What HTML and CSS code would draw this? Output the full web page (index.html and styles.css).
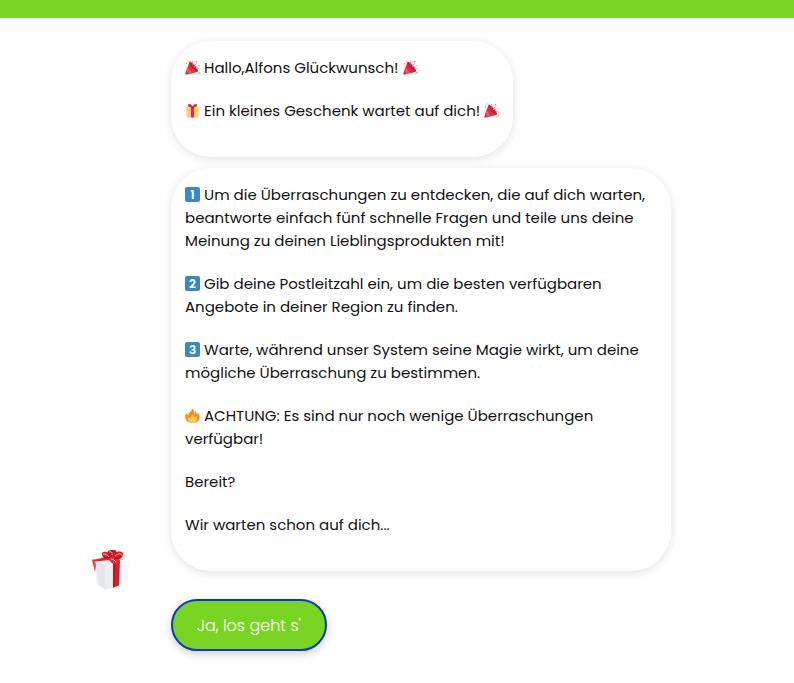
FILE: index.html
```html
<!DOCTYPE html>
<html lang="de">
<head>
<meta charset="utf-8">
<meta name="viewport" content="width=device-width, initial-scale=1">
<title>Überraschung</title>
<link rel="stylesheet" href="styles.css">
</head>
<body>
<svg class="symbols" aria-hidden="true">
  <symbol id="party" viewBox="0 0 16 16">
    <path d="M5 1.500 14 11.300Q14.500 13 11 13.200L1 15.700Q0 15.700.3 14.500Z" fill="#dd2e44"/>
    <path d="M4.400 4 3 8 7.500 14 4.400 14.700 1.500 11 3 7Z" fill="#ea596e"/>
    <path d="M5 1.500C7.500 2 14.500 9 13.500 11.800 11 13 4 5.800 5 1.500Z" fill="#c81c3a"/>
    <path d="M8 5.500C9.500 4 8.500 2.500 7.500.8M10 7.500Q9.500 4.500 12.500 4M12 9.500Q13.500 7.500 15.500 9.500" fill="none" stroke="#aa8dd8" stroke-width="1"/>
    <path d="M12 1 13 2.500M1 3.500l1 1M14.500 12.500l.7 2" stroke="#77b255" stroke-width="1.200"/>
    <path d="M2.500 1H4M10 2h1.200M14.300 6h1.300M12 7l1 .5M.5 7.500h1M13 15h1" stroke="#e9b95d" stroke-width="1.200"/>
  </symbol>
  <symbol id="present" viewBox="0 0 16 16">
    <path d="M1.500 6h13v8.500a1 1 0 0 1-1 1h-11a1 1 0 0 1-1-1Z" fill="#fdd27b"/>
    <rect x=".5" y="4" width="15" height="3.300" rx="1" fill="#ffd983"/>
    <path d="M1.500 7.300h13v1h-13Z" fill="#f5bf66"/>
    <path d="M6.300 4h3.400v11.500H6.300Z" fill="#da2f47"/>
    <path d="M8 4C6 4.500 3 4.500 3 2.700 3 .2 6.800.3 8 4ZM8 4c2 .5 5 .5 5-1.300C13 .2 9.200.3 8 4Z" fill="#dd2e44"/>
    <path d="M6.500 4h3v1.500h-3Z" fill="#b5122f"/>
  </symbol>
  <symbol id="fire" viewBox="0 0 16 16">
    <path d="M7.300.2C9.800 1.500 10 4.500 9.500 6.400 10.800 6 11.200 4.500 10.800 3 12.200 4 12.500 5.800 12.500 7 13.400 6.600 13.700 5.500 13.500 4.800 17.500 9 16 15.800 8 15.800 0 15.800-1.200 9 1.700 4.800 1.800 6.300 2.700 7.300 3.600 7.700 3.200 4.800 7.900 4 7.300.2Z" fill="#f58a1e"/>
    <path d="M8 6.500C10 8 9.400 9.500 9.700 10.300 10.600 10.100 11.500 9.300 11.500 8 14.500 12 11.800 15.600 8 15.600 4 15.600 1.800 12 4 8.800 4.300 10.300 5 10.800 5.700 10.800 5.500 9 8 8.600 8 6.500Z" fill="#ffcc4d"/>
  </symbol>
</svg>

<header class="topbar"></header>

<main class="chat">
  <div class="avatar">
    <svg class="avatar-image" viewBox="0 0 40 42" role="img" aria-label="Geschenk">
      <path d="M27 14 39 11 36 33 25 38Z" fill="#f9f9f9"/>
      <path d="M1 11 14 7 30 12 31 15 14 20 1 15Z" fill="#eeeff2"/>
      <path d="M3 16 14 19 15 41 6 35Z" fill="#e4e6ea"/>
      <path d="M14 19 30 14.500 27 37 15 41Z" fill="#ebecef"/>
      <path d="M1 11 14 16 14 20 1 15Z" fill="#e3e5ea"/>
      <path d="M14 16 31 12 30.500 16 14 20Z" fill="#f2f3f5"/>
      <path d="M3 16 5 17 8 36 6 35Z" fill="#f1f1f4"/>
      <path d="M22 13 29 11 28 36.500 22 38.500Z" fill="#de1c24"/>
      <path d="M22 14 24 13.500 24 37.800 22 38.500Z" fill="#c9141d"/>
      <path d="M1 11 3 10 5 16 4 23 2 15Z" fill="#e5484c"/>
      <path d="M2 11 15 8 20 11 4 12.500Z" fill="#dc2a30"/>
      <path d="M22 10C15 12 12 9 11 6 10 2 14 2 18 4L22 8Z" fill="#df2028"/>
      <path d="M19 7C14 2 18 1 22 1 28 0 25 6 22 9Z" fill="#c41620"/>
      <path d="M21 8C22 3 29 1 32 4 33 8 28 13 21 11Z" fill="#db1d27"/>
      <path d="M18 9C21 7 30 9 28 14 25 17 18 14 18 9Z" fill="#e52830"/>
      <path d="M12 5Q15 4 18 8M18 3Q22 2 21 6M24 7Q28 3 31 6M20 10Q23 10 25 13" fill="none" stroke="#f7aaa9" stroke-width="1"/>
      <path d="M13 8Q16 10 19 8M23 10Q28 10 30 7" fill="none" stroke="#a50c16" stroke-width="1"/>
    </svg>
  </div>

  <div class="messages">
    <section class="bubble">
      <p><svg class="emoji" role="img" aria-label="Konfetti"><use href="#party"/></svg> Hallo,Alfons Glückwunsch! <svg class="emoji" role="img" aria-label="Konfetti"><use href="#party"/></svg></p>
      <p><svg class="emoji" role="img" aria-label="Geschenk"><use href="#present"/></svg> Ein kleines Geschenk wartet auf dich! <svg class="emoji" role="img" aria-label="Konfetti"><use href="#party"/></svg></p>
    </section>
    <section class="bubble">
      <p><span class="emoji keycap">1</span> Um die Überraschungen zu entdecken, die auf dich warten, beantworte einfach fünf schnelle Fragen und teile uns deine Meinung zu deinen Lieblingsprodukten mit!</p>
      <p><span class="emoji keycap">2</span> Gib deine Postleitzahl ein, um die besten verfügbaren Angebote in deiner Region zu finden.</p>
      <p><span class="emoji keycap">3</span> Warte, während unser System seine Magie wirkt, um deine mögliche Überraschung zu bestimmen.</p>
      <p><svg class="emoji" role="img" aria-label="Feuer"><use href="#fire"/></svg> ACHTUNG: Es sind nur noch wenige Überraschungen verfügbar!</p>
      <p>Bereit?</p>
      <p>Wir warten schon auf dich...</p>
    </section>
  </div>

  <div class="actions">
    <button class="answer" type="button">Ja, los geht s'</button>
  </div>
</main>
</body>
</html>
```
FILE: styles.css
```css
* {
  box-sizing: border-box;
}

body {
  margin: 0;
  background: #fff;
  color: #111;
  font-family: Poppins, Inter, sans-serif;
  font-size: 15px;
  line-height: 23px;
}

.symbols {
  display: none;
}

.topbar {
  height: 18px;
  background: #7ad424;
}

.chat {
  display: grid;
  grid-template-columns: 40px minmax(0, 1fr);
  column-gap: 40px;
  max-width: 612px;
  margin: 0 auto;
  padding-top: 23px;
}

.avatar {
  align-self: end;
}

.avatar-image {
  display: block;
  width: 40px;
  height: 42px;
}

.messages {
  display: flex;
  flex-direction: column;
  align-items: flex-start;
  gap: 11px;
  padding-bottom: 20px;
}

.bubble {
  max-width: 500px;
  padding: 15px 14px;
  border-radius: 40px;
  background: #fff;
  box-shadow: 0 2px 10px rgba(0, 0, 0, 0.12);
}

.bubble p {
  margin: 0 0 20px;
}

.emoji {
  display: inline-block;
  width: 15px;
  height: 15px;
  vertical-align: -2px;
}

.keycap {
  border-radius: 2px;
  background: #3b88c3;
  color: #fff;
  font-size: 12px;
  font-weight: 600;
  line-height: 15px;
  text-align: center;
  vertical-align: 1px;
}

.actions {
  grid-column: 2;
  padding: 8px 0 32px;
}

.answer {
  height: 52px;
  padding: 0 24px;
  border: 2px solid #0b3bbd;
  border-radius: 26px;
  background: #7ad424;
  box-shadow: 0 3px 8px rgba(0, 0, 0, 0.2);
  color: #fff;
  font-family: inherit;
  font-size: 16px;
  font-weight: 300;
}
```
